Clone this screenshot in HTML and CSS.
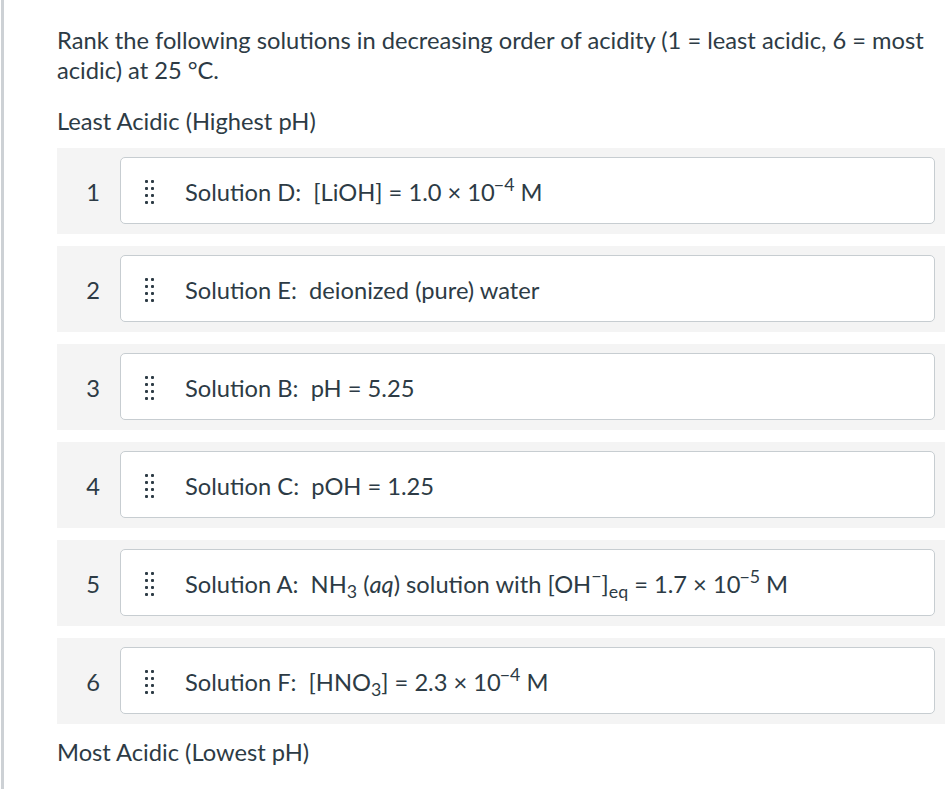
FILE: index.html
```html
<!DOCTYPE html>
<html lang="en">
<head>
<meta charset="utf-8">
<title>Rank solutions</title>
<link rel="stylesheet" href="styles.css">
</head>
<body>
<div class="page">
  <p class="prompt">Rank the following solutions in decreasing order of acidity (1 = least acidic, 6 = most acidic) at 25 °C.</p>
  <p class="label top-label">Least Acidic (Highest pH)</p>
  <ol class="rank-list">
    <li class="row">
      <span class="num">1</span>
      <div class="card">
        <span class="handle"><svg width="9" height="24" viewBox="0 0 9 24"><g fill="#2d3b45"><rect x="0" y="0" width="3" height="3" rx="1"/><rect x="6" y="0" width="3" height="3" rx="1"/><rect x="0" y="7" width="3" height="3" rx="1"/><rect x="6" y="7" width="3" height="3" rx="1"/><rect x="0" y="14" width="3" height="3" rx="1"/><rect x="6" y="14" width="3" height="3" rx="1"/><rect x="0" y="21" width="3" height="3" rx="1"/><rect x="6" y="21" width="3" height="3" rx="1"/></g></svg></span>
        <span class="text">Solution D:&nbsp; [LiOH] = 1.0 × 10<sup>−4</sup> M</span>
      </div>
    </li>
    <li class="row">
      <span class="num">2</span>
      <div class="card">
        <span class="handle"><svg width="9" height="24" viewBox="0 0 9 24"><g fill="#2d3b45"><rect x="0" y="0" width="3" height="3" rx="1"/><rect x="6" y="0" width="3" height="3" rx="1"/><rect x="0" y="7" width="3" height="3" rx="1"/><rect x="6" y="7" width="3" height="3" rx="1"/><rect x="0" y="14" width="3" height="3" rx="1"/><rect x="6" y="14" width="3" height="3" rx="1"/><rect x="0" y="21" width="3" height="3" rx="1"/><rect x="6" y="21" width="3" height="3" rx="1"/></g></svg></span>
        <span class="text">Solution E:&nbsp; deionized (pure) water</span>
      </div>
    </li>
    <li class="row">
      <span class="num">3</span>
      <div class="card">
        <span class="handle"><svg width="9" height="24" viewBox="0 0 9 24"><g fill="#2d3b45"><rect x="0" y="0" width="3" height="3" rx="1"/><rect x="6" y="0" width="3" height="3" rx="1"/><rect x="0" y="7" width="3" height="3" rx="1"/><rect x="6" y="7" width="3" height="3" rx="1"/><rect x="0" y="14" width="3" height="3" rx="1"/><rect x="6" y="14" width="3" height="3" rx="1"/><rect x="0" y="21" width="3" height="3" rx="1"/><rect x="6" y="21" width="3" height="3" rx="1"/></g></svg></span>
        <span class="text">Solution B:&nbsp; pH = 5.25</span>
      </div>
    </li>
    <li class="row">
      <span class="num">4</span>
      <div class="card">
        <span class="handle"><svg width="9" height="24" viewBox="0 0 9 24"><g fill="#2d3b45"><rect x="0" y="0" width="3" height="3" rx="1"/><rect x="6" y="0" width="3" height="3" rx="1"/><rect x="0" y="7" width="3" height="3" rx="1"/><rect x="6" y="7" width="3" height="3" rx="1"/><rect x="0" y="14" width="3" height="3" rx="1"/><rect x="6" y="14" width="3" height="3" rx="1"/><rect x="0" y="21" width="3" height="3" rx="1"/><rect x="6" y="21" width="3" height="3" rx="1"/></g></svg></span>
        <span class="text">Solution C:&nbsp; pOH = 1.25</span>
      </div>
    </li>
    <li class="row">
      <span class="num">5</span>
      <div class="card">
        <span class="handle"><svg width="9" height="24" viewBox="0 0 9 24"><g fill="#2d3b45"><rect x="0" y="0" width="3" height="3" rx="1"/><rect x="6" y="0" width="3" height="3" rx="1"/><rect x="0" y="7" width="3" height="3" rx="1"/><rect x="6" y="7" width="3" height="3" rx="1"/><rect x="0" y="14" width="3" height="3" rx="1"/><rect x="6" y="14" width="3" height="3" rx="1"/><rect x="0" y="21" width="3" height="3" rx="1"/><rect x="6" y="21" width="3" height="3" rx="1"/></g></svg></span>
        <span class="text">Solution A:&nbsp; NH<sub>3</sub> (<i>aq</i>) solution with [OH<sup class="minus">−</sup>]<sub>eq</sub> = 1.7 × 10<sup>−5</sup> M</span>
      </div>
    </li>
    <li class="row">
      <span class="num">6</span>
      <div class="card">
        <span class="handle"><svg width="9" height="24" viewBox="0 0 9 24"><g fill="#2d3b45"><rect x="0" y="0" width="3" height="3" rx="1"/><rect x="6" y="0" width="3" height="3" rx="1"/><rect x="0" y="7" width="3" height="3" rx="1"/><rect x="6" y="7" width="3" height="3" rx="1"/><rect x="0" y="14" width="3" height="3" rx="1"/><rect x="6" y="14" width="3" height="3" rx="1"/><rect x="0" y="21" width="3" height="3" rx="1"/><rect x="6" y="21" width="3" height="3" rx="1"/></g></svg></span>
        <span class="text">Solution F:&nbsp; [HNO<sub>3</sub>] = 2.3 × 10<sup>−4</sup> M</span>
      </div>
    </li>
  </ol>
  <p class="label bottom-label">Most Acidic (Lowest pH)</p>
</div>
</body>
</html>
```

FILE: styles.css
```css
html, body {
  margin: 0;
  padding: 0;
  background: #ffffff;
}

body {
  font-family: Lato, "Open Sans", sans-serif;
  color: #2d3b45;
  font-size: 23.7px;
  line-height: 30px;
  padding-left: 1px;
}

.page {
  border-left: 3px solid #cdd1d5;
  min-height: 789px;
  box-sizing: border-box;
  padding: 25px 0 0 53px;
}

.prompt {
  margin: 0;
  padding-right: 20px;
}

.label {
  margin: 0;
}

.top-label {
  margin-top: 21px;
  margin-bottom: 12px;
}

.bottom-label {
  margin-top: 13px;
}

.rank-list {
  list-style: none;
  margin: 0;
  padding: 0;
  display: flex;
  flex-direction: column;
  gap: 12px;
}

.row {
  background: #f4f4f4;
  display: flex;
  align-items: center;
  padding: 9px 10px 10px 0;
  height: 86px;
  box-sizing: border-box;
}

.num {
  width: 54px;
  padding-left: 9px;
  text-align: center;
  flex: none;
  position: relative;
  top: 1px;
}

.card {
  flex: 1;
  height: 67px;
  box-sizing: border-box;
  background: #ffffff;
  border: 1px solid #c7cdd1;
  border-radius: 5px;
  display: flex;
  align-items: center;
  padding-left: 24px;
}

.handle {
  display: flex;
  width: 9px;
  margin-right: 31px;
  position: relative;
  top: 1px;
}

.handle svg {
  display: block;
}

.text {
  white-space: nowrap;
  position: relative;
  top: 1px;
}

sup, sub {
  font-size: 0.75em;
  line-height: 0;
  position: relative;
  vertical-align: baseline;
}

sup {
  top: -0.55em;
  margin-left: -1px;
}

sup.minus {
  top: -0.6em;
  margin-left: 0;
}

sub {
  top: 0.3em;
}

i {
  font-style: italic;
}
```
